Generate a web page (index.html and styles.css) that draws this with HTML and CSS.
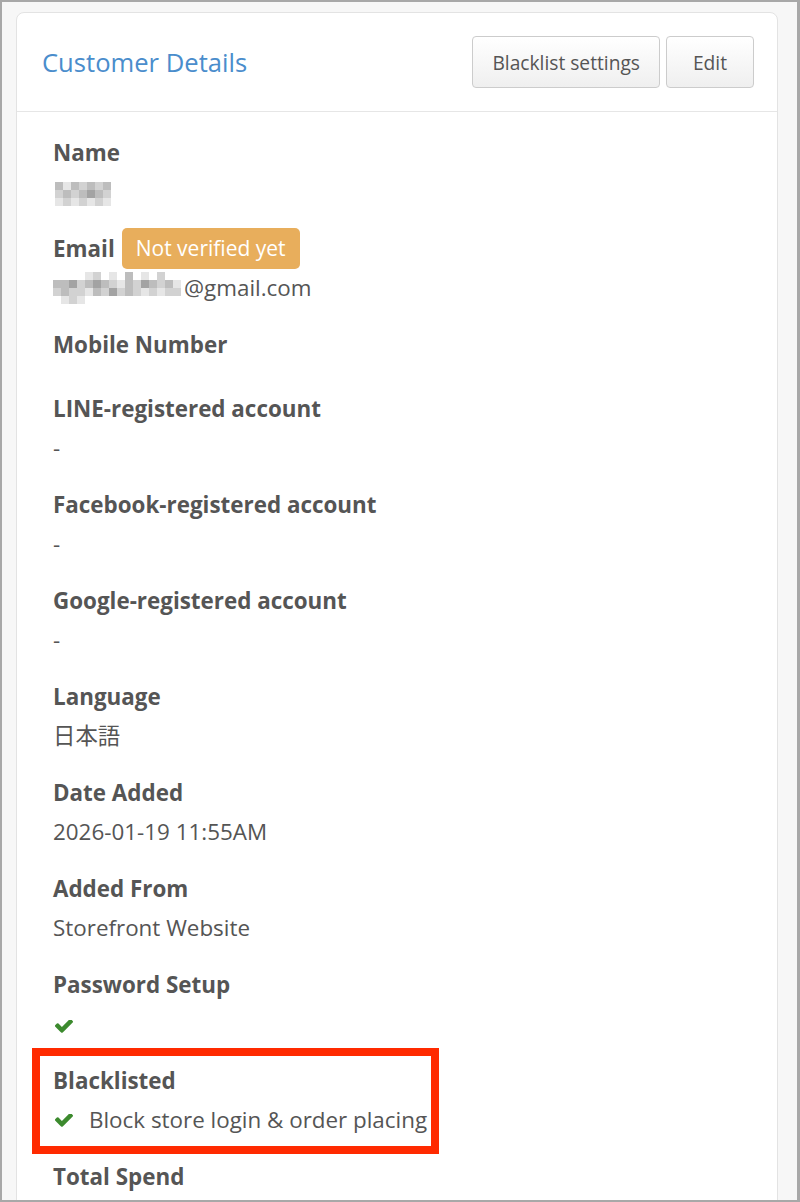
FILE: index.html
```html
<!DOCTYPE html>
<html lang="en">
<head>
    <meta charset="UTF-8">
    <meta name="viewport" content="width=device-width, initial-scale=1.0">
    <title>Customer Details</title>
    <link rel="stylesheet" href="styles.css">
</head>
<body>
    <div class="frame">
        <div class="card">
            <div class="card-header">
                <h2 class="card-title">Customer Details</h2>
                <div class="card-actions">
                    <button class="btn">Blacklist settings</button>
                    <button class="btn btn-edit">Edit</button>
                </div>
            </div>

            <div class="card-body">
                <div class="field">
                    <div class="field-label">Name</div>
                    <div class="field-value">
                        <span class="mosaic mosaic-name" data-rows="3132323,2323432,1212121"></span>
                    </div>
                </div>

                <div class="field">
                    <div class="field-label">Email <span class="badge">Not verified yet</span></div>
                    <div class="field-value">
                        <span class="mosaic mosaic-email" data-rows="0000120103010200,3342343213243231,2322132423212122,0121000000000000"></span>@gmail.com
                    </div>
                </div>

                <div class="field">
                    <div class="field-label">Mobile Number</div>
                    <div class="field-value"></div>
                </div>

                <div class="field">
                    <div class="field-label">LINE-registered account</div>
                    <div class="field-value">-</div>
                </div>

                <div class="field">
                    <div class="field-label">Facebook-registered account</div>
                    <div class="field-value">-</div>
                </div>

                <div class="field">
                    <div class="field-label">Google-registered account</div>
                    <div class="field-value">-</div>
                </div>

                <div class="field">
                    <div class="field-label">Language</div>
                    <div class="field-value">日本語</div>
                </div>

                <div class="field">
                    <div class="field-label">Date Added</div>
                    <div class="field-value">2026-01-19 11:55AM</div>
                </div>

                <div class="field">
                    <div class="field-label">Added From</div>
                    <div class="field-value">Storefront Website</div>
                </div>

                <div class="field">
                    <div class="field-label">Password Setup</div>
                    <div class="field-value">
                        <svg class="check" viewBox="121 430 1550 1100"><path d="M1671 566q0 40-28 68l-724 724-136 136q-28 28-68 28t-68-28l-136-136-362-362q-28-28-28-68t28-68l136-136q28-28 68-28t68 28l294 295 656-657q28-28 68-28t68 28l136 136q28 28 28 68z"/></svg>
                    </div>
                </div>

                <div class="field flagged">
                    <div class="field-label">Blacklisted</div>
                    <div class="field-value with-icon">
                        <svg class="check" viewBox="121 430 1550 1100"><path d="M1671 566q0 40-28 68l-724 724-136 136q-28 28-68 28t-68-28l-136-136-362-362q-28-28-28-68t28-68l136-136q28-28 68-28t68 28l294 295 656-657q28-28 68-28t68 28l136 136q28 28 28 68z"/></svg>
                        Block store login &amp; order placing
                    </div>
                </div>

                <div class="field">
                    <div class="field-label">Total Spend</div>
                </div>
            </div>
        </div>
    </div>

    <script>
        // blurred (pixelated) personal data
        const shades = ['transparent', '#e6e6e6', '#d2d2d2', '#bdbdbd', '#a3a3a3'];
        document.querySelectorAll('.mosaic').forEach(function (el) {
            el.dataset.rows.split(',').forEach(function (row) {
                row.split('').forEach(function (c) {
                    const cell = document.createElement('i');
                    cell.style.background = shades[+c];
                    el.appendChild(cell);
                });
            });
        });
    </script>
</body>
</html>
```

FILE: styles.css
```css
html, body {
    margin: 0;
    padding: 0;
}

body {
    font-family: 'Open Sans', 'Noto Sans CJK JP', sans-serif;
    color: #555555;
}

.frame {
    height: 1202px;
    box-sizing: border-box;
    border: 2px solid #a8a8a8;
    border-right-width: 3px;
    background-color: #f7f7f7;
    padding: 10px 19px 0 14px;
    overflow: hidden;
}

.card {
    background-color: #ffffff;
    border: 1px solid #e3e3e3;
    border-radius: 8px;
}

.card-header {
    display: flex;
    justify-content: space-between;
    align-items: center;
    padding: 23px 23px 23px 25px;
    border-bottom: 1px solid #e6e6e6;
}

.card-title {
    margin: 0;
    font-size: 25.6px;
    font-weight: normal;
    color: #4a8dcc;
}

.card-actions {
    display: flex;
    gap: 6px;
}

.btn {
    height: 52px;
    padding: 0 19px;
    font-family: inherit;
    font-size: 19.2px;
    color: #555555;
    background: linear-gradient(#ffffff, #efefef);
    border: 1px solid #cccccc;
    border-radius: 4px;
}

.btn-edit {
    min-width: 88px;
}

.card-body {
    padding: 24px 36px;
}

.field {
    display: flex;
    flex-direction: column;
    margin-bottom: 24px;
}

.field-label {
    display: flex;
    align-items: center;
    gap: 7px;
    height: 32px;
    margin-bottom: 8px;
    font-size: 22.4px;
    font-weight: bold;
}

.field-value {
    font-size: 22.4px;
    line-height: 32px;
}

.field-value.with-icon {
    display: flex;
    align-items: center;
    gap: 16px;
}

.badge {
    flex-shrink: 0;
    height: 41px;
    line-height: 41px;
    padding: 0 14px;
    font-size: 21px;
    font-weight: normal;
    color: #ffffff;
    background-color: #e8ae5c;
    border-radius: 5px;
}

.mosaic {
    display: inline-grid;
    grid-auto-rows: 8px;
    vertical-align: middle;
}

.mosaic i {
    display: block;
}

.mosaic-name {
    grid-template-columns: repeat(7, 8px);
    margin-left: 2px;
}

.mosaic-email {
    grid-template-columns: repeat(16, 8px);
    margin-right: 3px;
    vertical-align: top;
}

.check {
    width: 18px;
    height: 13px;
    margin-left: 2px;
    fill: #3c8a2e;
    vertical-align: middle;
}

.flagged {
    width: fit-content;
    margin: -16px 0 6px -21px;
    padding: 8px 4px 10px 13px;
    border: 8px solid #ff2a00;
}
```
